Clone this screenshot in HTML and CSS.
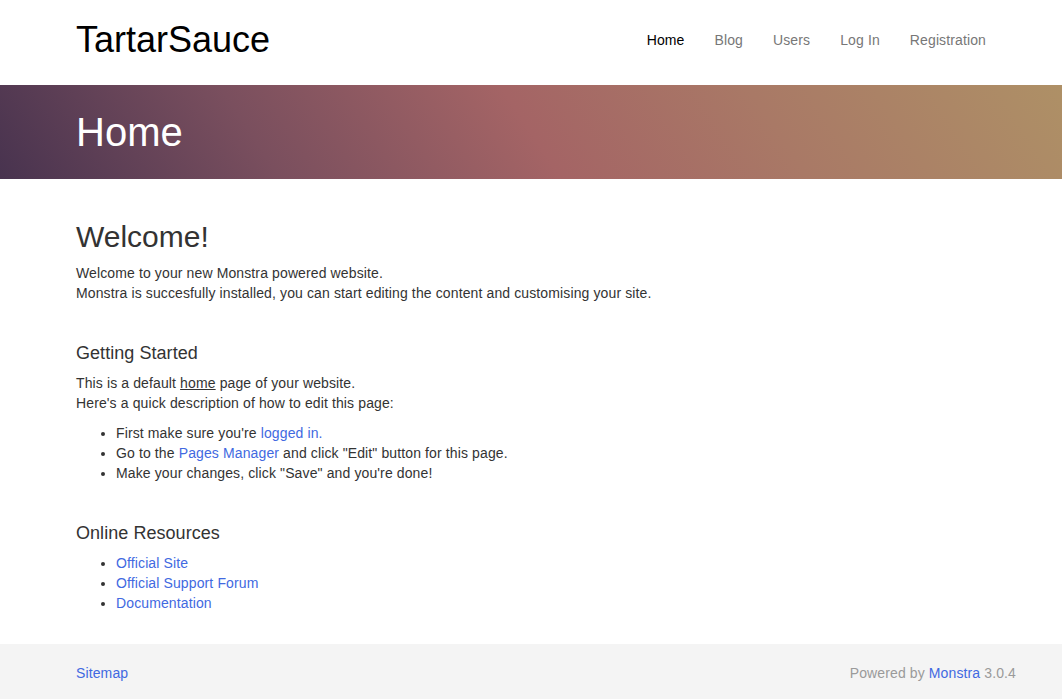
FILE: index.html
```html
<!DOCTYPE html>
<html lang="en">
<head>
<meta charset="utf-8">
<title>TartarSauce</title>
<link rel="stylesheet" href="styles.css">
</head>
<body>
<header class="site-header">
  <div class="container header-inner">
    <a class="brand" href="#">TartarSauce</a>
    <nav class="main-nav">
      <a class="nav-link active" href="#">Home</a>
      <a class="nav-link" href="#">Blog</a>
      <a class="nav-link" href="#">Users</a>
      <a class="nav-link" href="#">Log In</a>
      <a class="nav-link" href="#">Registration</a>
    </nav>
  </div>
</header>
<section class="banner">
  <div class="container">
    <h1 class="banner-title">Home</h1>
  </div>
</section>
<main class="container content">
  <h1 class="page-heading">Welcome!</h1>
  <p>Welcome to your new Monstra powered website.<br>Monstra is succesfully installed, you can start editing the content and customising your site.</p>
  <h3 class="section-heading">Getting Started</h3>
  <p>This is a default <u>home</u> page of your website.<br>Here's a quick description of how to edit this page:</p>
  <ul class="list">
    <li>First make sure you're <a href="#">logged in.</a></li>
    <li>Go to the <a href="#">Pages Manager</a> and click "Edit" button for this page.</li>
    <li>Make your changes, click "Save" and you're done!</li>
  </ul>
  <h3 class="section-heading">Online Resources</h3>
  <ul class="list">
    <li><a href="#">Official Site</a></li>
    <li><a href="#">Official Support Forum</a></li>
    <li><a href="#">Documentation</a></li>
  </ul>
</main>
<footer class="site-footer">
  <div class="footer-inner">
    <a href="#">Sitemap</a>
    <span class="powered">Powered by <a href="#">Monstra</a> 3.0.4</span>
  </div>
</footer>
</body>
</html>
```
FILE: styles.css
```css
* { box-sizing: border-box; }
html, body { margin: 0; padding: 0; }
body {
  font-family: "Liberation Sans", Arial, sans-serif;
  font-size: 14px;
  line-height: 20px;
  letter-spacing: 0.12px;
  color: #333;
  background: #fff;
}
a { color: #4169e1; text-decoration: none; }
.container {
  padding-left: 76px;
  padding-right: 76px;
}
.site-header { background: #fff; }
.header-inner {
  height: 85px;
  padding-bottom: 5px;
  display: flex;
  align-items: center;
  justify-content: space-between;
}
.brand {
  font-size: 36px;
  line-height: 40px;
  letter-spacing: 0;
  color: #000;
}
.main-nav {
  display: flex;
  gap: 30px;
}
.nav-link { color: #777; }
.nav-link.active { color: #000; }
.banner {
  height: 94px;
  background: linear-gradient(57deg, #48334f 0%, #7a4f5e 25%, #a46465 50%, #a97966 72%, #ae9066 100%);
  display: flex;
  align-items: center;
}
.banner .container { width: 100%; }
.banner-title {
  margin: 0;
  color: #fff;
  font-size: 40px;
  line-height: 44px;
  font-weight: normal;
  letter-spacing: 0;
}
.content {
  padding-top: 41px;
  padding-bottom: 21px;
}
.page-heading {
  font-size: 30px;
  line-height: 33px;
  font-weight: normal;
  letter-spacing: 0;
  margin: 0 0 10px;
}
p { margin: 0 0 10px; }
.section-heading {
  font-size: 18px;
  line-height: 20px;
  font-weight: normal;
  letter-spacing: 0.05px;
  margin: 40px 0 10px;
}
.list {
  margin: 0 0 10px;
  padding-left: 40px;
}
.site-footer {
  background: #f4f4f4;
  padding: 19px 0 19px;
}
.footer-inner {
  display: flex;
  justify-content: space-between;
  padding-left: 76px;
  padding-right: 46px;
}
.powered { color: #9a9a9a; }
```
